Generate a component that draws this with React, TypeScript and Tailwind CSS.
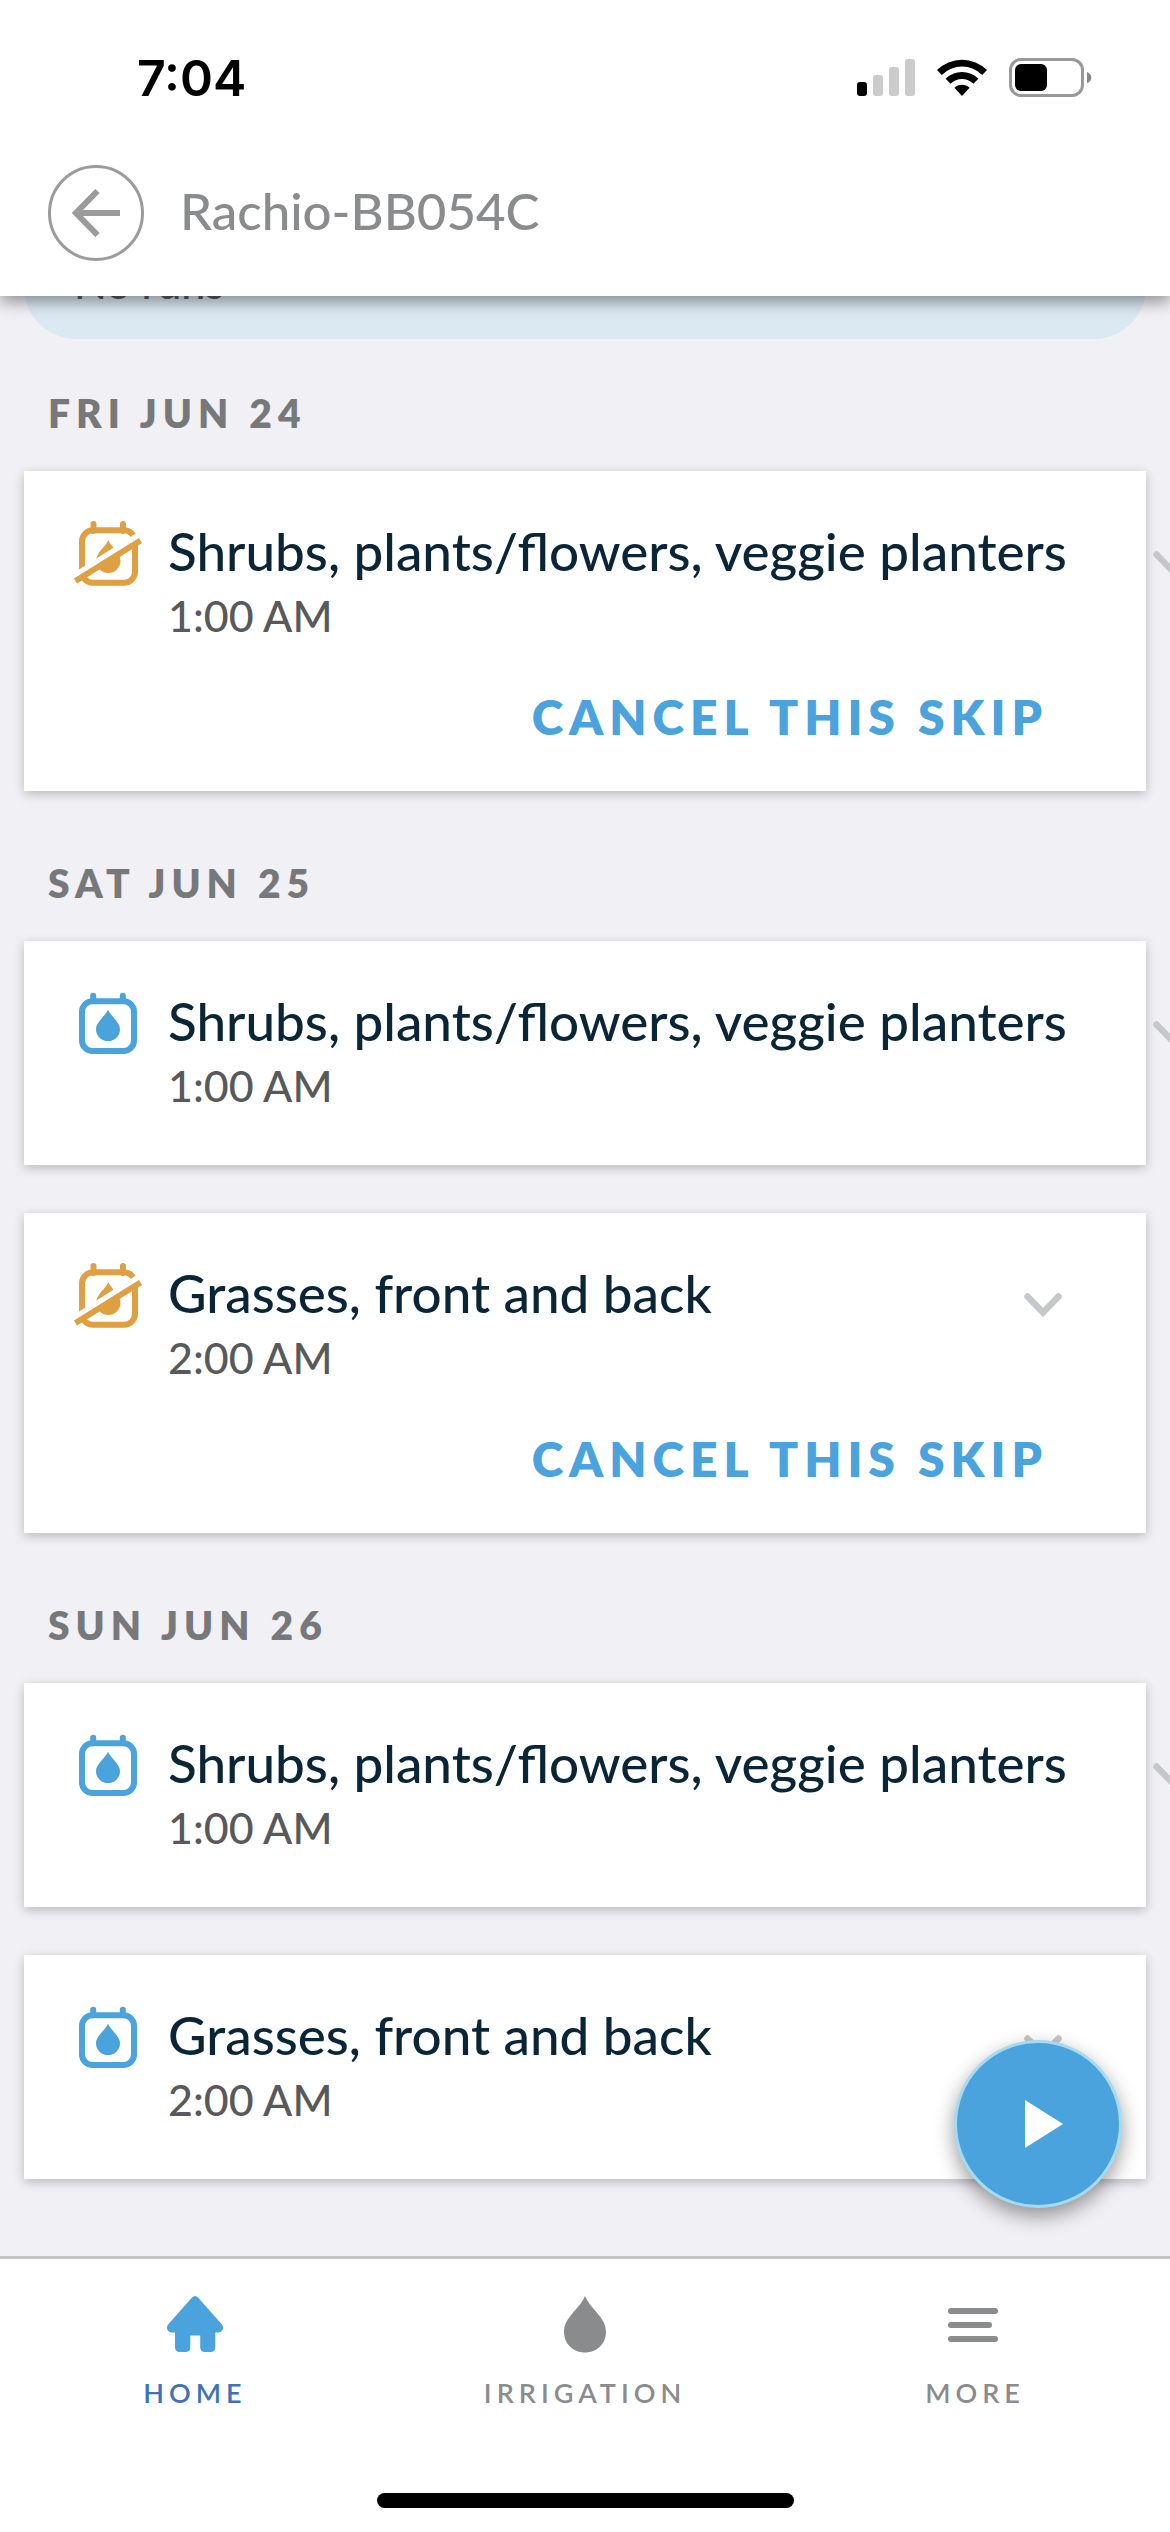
import { useState } from "react";
import clsx from "clsx";

type Run = { name: string; time: string; skipped?: boolean };
type Day = { label: string; runs: Run[] };

const shrubs = "Shrubs, plants/flowers, veggie planters";
const grasses = "Grasses, front and back";

const days: Day[] = [
  {
    label: "Fri Jun 24",
    runs: [{ name: shrubs, time: "1:00 AM", skipped: true }],
  },
  {
    label: "Sat Jun 25",
    runs: [
      { name: shrubs, time: "1:00 AM" },
      { name: grasses, time: "2:00 AM", skipped: true },
    ],
  },
  {
    label: "Sun Jun 26",
    runs: [
      { name: shrubs, time: "1:00 AM" },
      { name: grasses, time: "2:00 AM" },
    ],
  },
  { label: "Mon Jun 27", runs: [] },
];

function SignalIcon() {
  return (
    <svg className="h-10 w-[58px]" viewBox="0 0 58 40">
      <rect x="0" y="24" width="10" height="14" rx="3" fill="#000" />
      <rect x="16" y="17" width="10" height="21" rx="3" fill="#cbcbcb" />
      <rect x="32" y="9" width="10" height="29" rx="3" fill="#cbcbcb" />
      <rect x="48" y="1" width="10" height="37" rx="3" fill="#cbcbcb" />
    </svg>
  );
}

function WifiIcon() {
  return (
    <svg className="h-10 w-[50px]" viewBox="0 0 50 40">
      <path d="M0 12 A35.5 35.5 0 0 1 50 12 L45.2 16.9 A28.6 28.6 0 0 0 4.8 16.9Z" />
      <path d="M8.6 20.8 A23.3 23.3 0 0 1 41.4 20.8 L36.4 25.8 A16.2 16.2 0 0 0 13.6 25.8Z" />
      <path d="M17.4 29.8 A10.8 10.8 0 0 1 32.6 29.8 L25 38Z" />
    </svg>
  );
}

function BatteryIcon() {
  return (
    <svg className="h-10 w-[83px]" viewBox="0 0 83 40">
      <rect
        x="1.5"
        y="1.5"
        width="72"
        height="36"
        rx="10.5"
        fill="none"
        stroke="#999"
        strokeWidth="3"
      />
      <rect x="6" y="6" width="32" height="27" rx="6" />
      <path d="M78 14 C80.700 15 82.300 17 82.300 19.500 C82.300 22 80.700 24.300 78 25.300Z" fill="#888" />
    </svg>
  );
}

function CalendarIcon({ skipped }: { skipped?: boolean }) {
  if (skipped) {
    return (
      <svg className="size-[72px] shrink-0" viewBox="12 19 72 72" fill="none">
        <g stroke="#dfa044" strokeWidth="6">
          <rect x="22" y="30.300" width="53" height="52.500" rx="11" />
          <path d="M33.500 31V24M63 31V24" strokeLinecap="round" />
        </g>
        <path
          d="M48.300 40.300C51.500 47 60.500 53 60.500 60.800a12.200 12.200 0 0 1-24.400 0C36.100 53 45.200 47 48.300 40.300Z"
          fill="#dfa044"
        />
        {/* white gap above the slash */}
        <path d="M12 77.500L79 35" stroke="#fff" strokeWidth="6" />
        <path d="M15.500 81L80.500 40.500" stroke="#dfa044" strokeWidth="6" />
      </svg>
    );
  }
  return (
    <svg className="size-[72px] shrink-0" viewBox="12 19 72 72" fill="none">
      <g stroke="#4aa3dc" strokeWidth="6">
        <rect x="22" y="31.300" width="52" height="49.700" rx="10.500" />
        <path d="M33.200 31V25.800M62.800 31V25.800" strokeLinecap="round" />
      </g>
      <path
        d="M48 39.800C51 46.500 60 52 60 59.300a12 11.800 0 0 1-24 0C36 52 45 46.500 48 39.800Z"
        fill="#4aa3dc"
      />
    </svg>
  );
}

function RunCard({ run }: { run: Run }) {
  return (
    <article className="bg-white shadow-[0_3px_10px_rgba(0,0,0,0.24)]">
      <div className="flex items-start pt-12 pl-12">
        <CalendarIcon skipped={run.skipped} />
        <div className="ml-6 shrink-0 grow whitespace-nowrap">
          <h3 className="text-[53px] leading-[64px] font-medium text-[#0a2636]">
            {run.name}
          </h3>
          <p className="mt-1.5 text-[43px] leading-[54px] font-medium text-[#58595b]">
            {run.time}
          </p>
        </div>
        <button
          aria-label="Show details"
          className="mt-8 mr-[84px] ml-[86px] shrink-0"
        >
          <svg className="h-6 w-[38px]" viewBox="0 0 38 24" fill="none">
            <path
              d="M3.500 3.500L19 19.500L34.500 3.500"
              stroke="#c6c7ca"
              strokeWidth="6.500"
              strokeLinecap="round"
            />
          </svg>
        </button>
      </div>
      {run.skipped ? (
        <div className="flex justify-end pt-[46px] pr-[98px] pb-[46px]">
          <button className="text-[48px] leading-[56px] font-extrabold tracking-[6px] text-[#4aa3dc] uppercase">
            Cancel this skip
          </button>
        </div>
      ) : (
        <div className="h-[52px]" />
      )}
    </article>
  );
}

const tabs = [
  {
    id: "home",
    label: "Home",
    icon: (
      <svg className="h-[60px] w-14" viewBox="0 0 56 60" fill="#4aa3dc">
        <path d="M25 4.500Q28 1.500 31 4.500L54.500 31Q57 34 55.500 37Q54 39.500 51 39.500H48.300V54Q48.300 59 43.500 59H38Q33.200 59 33.200 54V42.500H23.300V54Q23.300 59 18.500 59H13Q8 59 8 54V39.500H5Q2 39.500 .5 37Q-1 34 1.500 31Z" />
      </svg>
    ),
  },
  {
    id: "irrigation",
    label: "Irrigation",
    icon: (
      <svg className="h-[60px] w-11" viewBox="0 0 44 60" fill="#8a8b8d">
        <path d="M22 3C28 17 43 24 43 39C43 51 33.500 59.500 22 59.500S1 51 1 39C1 24 16 17 22 3Z" />
      </svg>
    ),
  },
  {
    id: "more",
    label: "More",
    icon: (
      <svg className="h-[60px] w-14" viewBox="0 0 56 60" fill="#8a8b8d">
        <rect x="1" y="15" width="50" height="6" rx="3" />
        <rect x="1" y="29" width="44" height="6" rx="3" />
        <rect x="1" y="43" width="50" height="6" rx="3" />
      </svg>
    ),
  },
];

export default function App() {
  const [tab, setTab] = useState("home");

  return (
    <div className="flex h-screen flex-col overflow-hidden bg-[#f1f0f5] font-['Lato',sans-serif]">
      {/* Header */}
      <header className="z-10 bg-white pb-[35px] shadow-[0_6px_15px_rgba(0,0,0,0.4)]">
        <div className="flex items-center justify-between pt-12 pr-[78px] pl-[137px]">
          <span className="font-['Inter',sans-serif] text-[50px] leading-[60px] font-semibold text-black">
            7:04
          </span>
          <div className="flex gap-[22px]">
            <SignalIcon />
            <WifiIcon />
            <BatteryIcon />
          </div>
        </div>
        <div className="mt-[57px] flex items-center gap-9 pl-12">
          <button
            aria-label="Back"
            className="flex size-24 items-center justify-center rounded-full border-3 border-[#9b9b9b]"
          >
            <svg className="size-12" viewBox="0 0 48 48" fill="none">
              <path
                d="M48 24H4M25.500 2L4 24L25.500 46"
                stroke="#9b9b9b"
                strokeWidth="6"
              />
            </svg>
          </button>
          <h1 className="pb-1 text-[51px] leading-[60px] font-medium text-[#8a8b8d]">
            Rachio-BB054C
          </h1>
        </div>
      </header>

      {/* Schedule */}
      <main className="relative min-h-0 flex-1 overflow-hidden px-6">
        <div className="-mt-24 rounded-[52px] bg-[#dbe9f2] px-[50px] pt-14 pb-[29px]">
          <p className="text-[43px] leading-[54px] font-medium text-[#58595b]">
            No runs
          </p>
        </div>
        {days.map((day, i) => (
          <section key={day.label} className={i === 0 ? "mt-12" : "mt-[66px]"}>
            <h2 className="pl-6 text-[39px] leading-[52px] font-extrabold tracking-[6px] text-[#77787a] uppercase">
              {day.label}
            </h2>
            <div className="mt-8 flex flex-col gap-12">
              {day.runs.map((run) => (
                <RunCard key={run.name} run={run} />
              ))}
            </div>
          </section>
        ))}
        <button
          aria-label="Quick run"
          className="absolute right-12 bottom-12 flex size-[168px] items-center justify-center rounded-full border-3 border-[#a6daf0] bg-[#4aa3dc] shadow-[0_8px_20px_rgba(0,0,0,0.4)]"
        >
          <svg className="ml-3 h-12 w-[38px]" viewBox="0 0 38 48" fill="#fff">
            <path d="M0 0L38 24L0 48Z" />
          </svg>
        </button>
      </main>

      {/* Tab bar */}
      <nav className="border-t-3 border-[#c4c6c4] bg-white pt-[34px] pb-6">
        <div className="grid grid-cols-3">
          {tabs.map((t) => (
            <button
              key={t.id}
              onClick={() => setTab(t.id)}
              className={clsx(
                "flex flex-col items-center gap-6 text-[27px] leading-[32px] font-semibold tracking-[5px] uppercase",
                tab === t.id ? "text-[#3a73b9]" : "text-[#8a8b8d]"
              )}
            >
              {t.icon}
              {t.label}
            </button>
          ))}
        </div>
        <div className="mx-auto mt-[84px] h-[15px] w-[417px] rounded-full bg-black" />
      </nav>
    </div>
  );
}
